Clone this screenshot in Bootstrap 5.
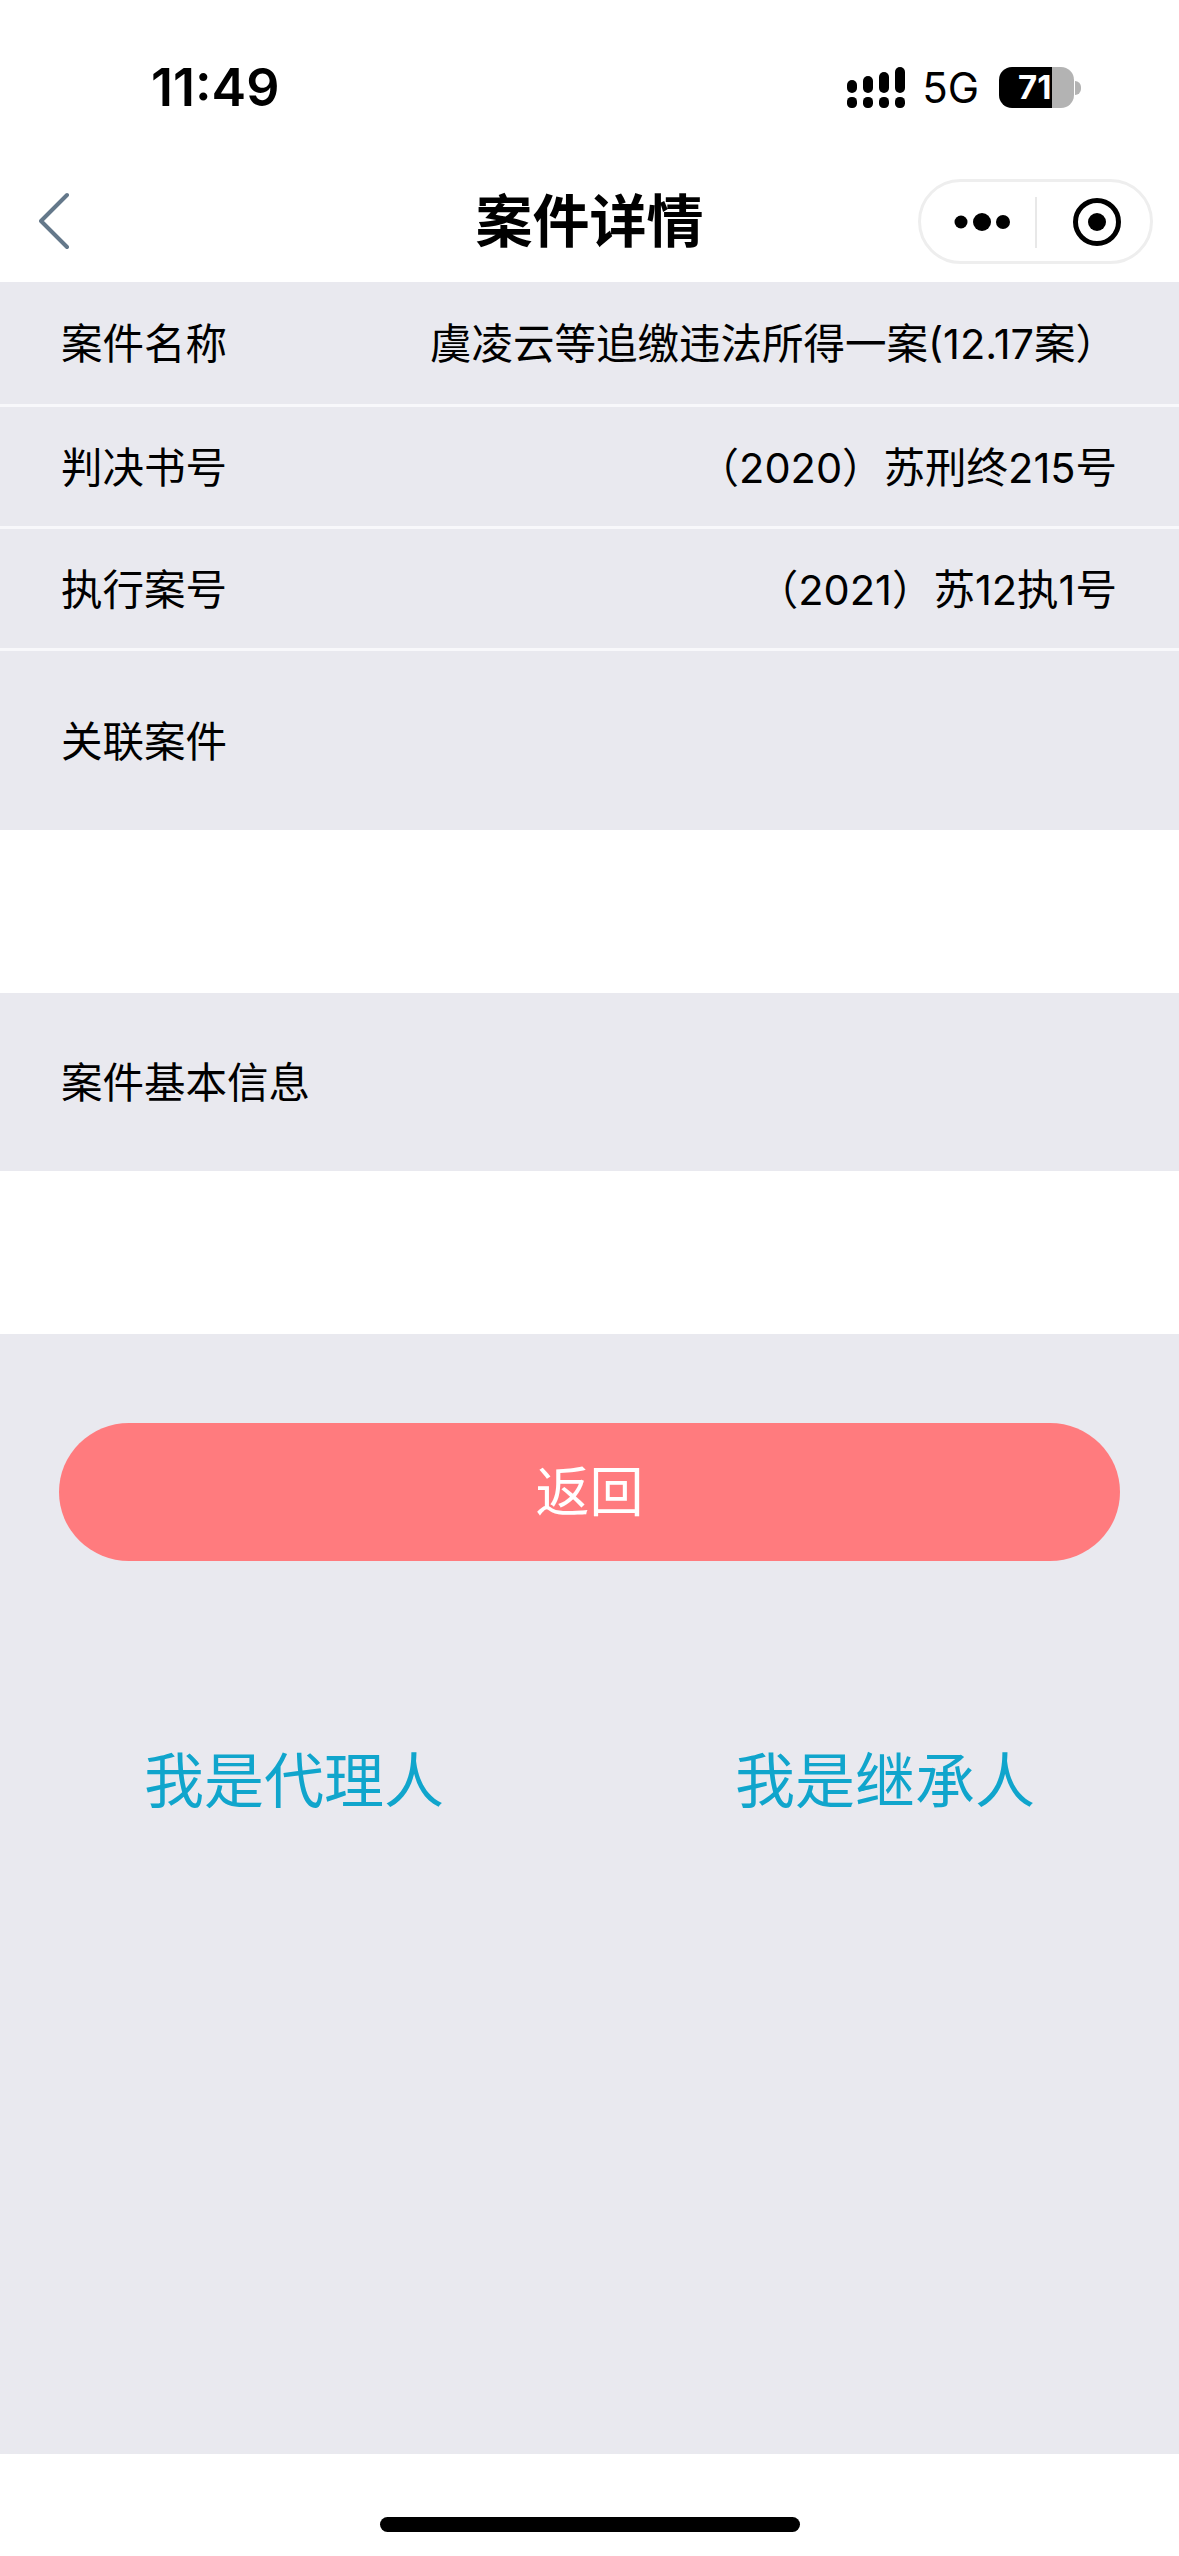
<!doctype html>
<html lang="zh">
<head>
<meta charset="utf-8">
<link href="https://cdn.jsdelivr.net/npm/bootstrap@5.3.0/dist/css/bootstrap.min.css" rel="stylesheet">
<style>
html,body{margin:0;padding:0;background:#fff}
.phone{width:1179px;height:2556px;font-family:Inter,"Noto Sans CJK SC",sans-serif;color:#000;overflow:hidden}
.status-strip{height:160px;padding:67px 98px 0 151px}
.clock{font-size:52px;font-weight:600;line-height:41px}
.net{font-size:42px;line-height:41px;margin:0 20px 0 17px;font-weight:400}
.batt{width:75px;height:41px;border-radius:13px;font-size:33px;font-weight:700;line-height:41px;color:#fff;background:linear-gradient(to right,#000 53px,#b3b3b3 53px);padding-left:19px}
.nub{width:6px;height:14px;margin-left:1px;background:#b3b3b3;border-radius:0 7px 7px 0}
.nav-strip{height:122px;display:grid;grid-template-columns:1fr auto 1fr;align-items:center;padding:0 26px}
.back-cell{padding-left:13px}
.page-title{font-size:57px;font-weight:700;line-height:1}
.capsule{width:235px;height:85px;border:3px solid #eeeeee;border-radius:43px}
.sheet{background:#e9e9ef}
.info-line{height:122px;padding:4px 62px 0 61px;font-size:41.5px;line-height:1.2;border-bottom:3px solid #f8f8fb}
.info-first{height:125px}
.info-tall{height:179px;padding:3px 62px 0 61px;font-size:41.5px}
.info-extra{height:178px;padding:3px 61px 0;font-size:41.5px}
.gap-white{height:163px;background:#fff}
.actions{flex:1 1 auto;padding:89px 59px 0}
.back-btn{height:138px;background:#ff7b7e;color:#fff;font-size:54px;border:0;border-radius:70px / 69px;width:100%}
.link-pair{margin-top:184px;padding:0 85px}
.role-link{font-size:60px;line-height:1.2;color:#10a5cc;text-decoration:none}
.foot{height:102px;background:#fff;padding-top:63px}
.home-bar{width:420px;height:15px;background:#000;border-radius:8px}
</style>
</head>
<body>
<div class="phone d-flex flex-column">
  <div class="status-strip d-flex justify-content-between align-items-start">
    <div class="clock">11:49</div>
    <div class="d-flex align-items-center">
      <svg width="58" height="41" viewBox="0 0 58 41"><g fill="#000"><rect x="0" y="13" width="10" height="13" rx="5"/><rect x="16" y="9" width="10" height="17" rx="5"/><rect x="32" y="5" width="10" height="21" rx="5"/><rect x="48" y="0" width="10" height="26" rx="5"/><rect x="0" y="30" width="10" height="11" rx="4.5"/><rect x="16" y="30" width="10" height="11" rx="4.5"/><rect x="32" y="30" width="10" height="11" rx="4.5"/><rect x="48" y="30" width="10" height="11" rx="4.5"/></g></svg>
      <span class="net">5G</span>
      <div class="batt">71</div>
      <div class="nub"></div>
    </div>
  </div>
  <div class="nav-strip">
    <div class="back-cell d-flex align-items-center">
      <svg width="32" height="58" viewBox="0 0 32 58"><path d="M28 3 L2 29 L28 55" fill="none" stroke="#64788a" stroke-width="4" stroke-linecap="round" stroke-linejoin="round"/></svg>
    </div>
    <div class="page-title">案件详情</div>
    <div class="d-flex justify-content-end">
      <div class="capsule d-flex align-items-center">
        <svg width="229" height="79" viewBox="0 0 229 79"><circle cx="40" cy="40" r="6.5" fill="#000"/><circle cx="61" cy="40" r="9" fill="#000"/><circle cx="82" cy="40" r="7" fill="#000"/><rect x="114" y="15" width="2" height="51" fill="#e8e8e8"/><circle cx="176" cy="40" r="21.5" fill="none" stroke="#000" stroke-width="5"/><circle cx="176" cy="40" r="9" fill="#000"/></svg>
      </div>
    </div>
  </div>
  <div class="sheet info-line info-first d-flex justify-content-between align-items-center"><span>案件名称</span><span>虞凌云等追缴违法所得一案(12.17案）</span></div>
  <div class="sheet info-line d-flex justify-content-between align-items-center"><span>判决书号</span><span>（2020）苏刑终215号</span></div>
  <div class="sheet info-line d-flex justify-content-between align-items-center"><span>执行案号</span><span>（2021）苏12执1号</span></div>
  <div class="sheet info-tall d-flex align-items-center"><span>关联案件</span></div>
  <div class="gap-white"></div>
  <div class="sheet info-extra d-flex align-items-center"><span>案件基本信息</span></div>
  <div class="gap-white"></div>
  <div class="sheet actions">
    <button type="button" class="btn back-btn">返回</button>
    <div class="link-pair d-flex justify-content-between">
      <a class="role-link" href="#">我是代理人</a>
      <a class="role-link" href="#">我是继承人</a>
    </div>
  </div>
  <div class="foot d-flex justify-content-center align-items-start"><div class="home-bar"></div></div>
</div>
<script src="https://cdn.jsdelivr.net/npm/bootstrap@5.3.0/dist/js/bootstrap.bundle.min.js"></script>
</body>
</html>
